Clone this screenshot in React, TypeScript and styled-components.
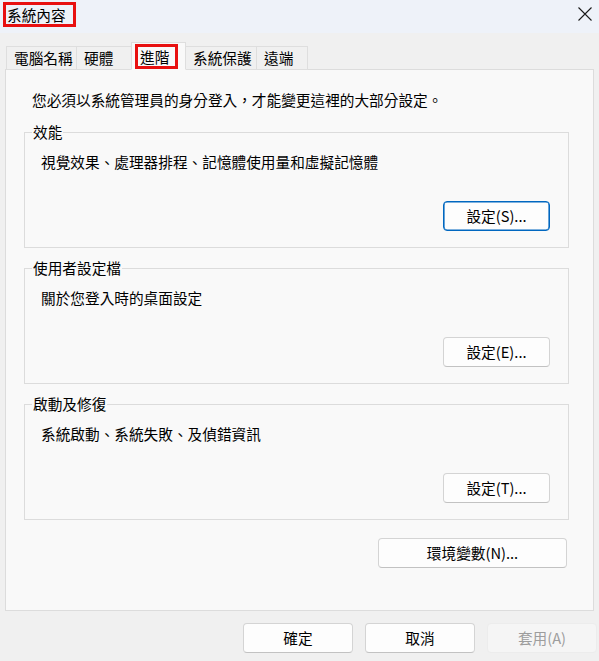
import React from "react";
import styled, { createGlobalStyle } from "styled-components";

const Global = createGlobalStyle`
  html, body { margin: 0; padding: 0; }
  body {
    background: #f0f0f0;
    font-family: "Noto Sans CJK TC", "Noto Sans", sans-serif;
    font-size: 14.67px;
    color: #000;
  }
  * { box-sizing: border-box; }
`;

const Window = styled.div`
  width: 599px;
  height: 661px;
  display: flex;
  flex-direction: column;
  background: #f0f0f0;
  overflow: hidden;
`;

const TitleBar = styled.div`
  height: 33px;
  flex: none;
  background: #eef2f9;
  display: flex;
  align-items: flex-start;
  justify-content: space-between;
  padding: 2px 6px 0 3px;
`;

const Highlight = styled.span`
  display: inline-flex;
  align-items: center;
  border: 3px solid #e81010;
  line-height: 19px;
`;

const TitleText = styled(Highlight)`
  height: 25px;
  padding: 0 7px 0 1px;
  font-size: 14.67px;
`;

const CloseButton = styled.button`
  border: 0;
  background: transparent;
  padding: 0;
  margin-top: 4px;
  width: 16px;
  height: 16px;
  display: flex;
`;

const Body = styled.div`
  flex: 1;
  display: flex;
  flex-direction: column;
  padding: 0 5px;
`;

const TabStrip = styled.div`
  display: flex;
  align-items: flex-end;
  height: 36px;
  padding-left: 1px;
  position: relative;
  z-index: 1;
`;

const Tab = styled.div<{ $w: number; $active?: boolean; $first?: boolean }>`
  width: ${(p) => p.$w}px;
  height: ${(p) => (p.$active ? 28 : 24)}px;
  margin: 0 0 -1px ${(p) => (p.$active ? -2 : 0)}px;
  padding-left: ${(p) => (p.$active ? 3 : 7)}px;
  padding-top: ${(p) => (p.$active ? 1 : 0)}px;
  display: flex;
  align-items: center;
  background: ${(p) => (p.$active ? "#f9f9f9" : "#f0f0f0")};
  border: 1px solid #dedede;
  border-bottom-color: ${(p) => (p.$active ? "#f9f9f9" : "#dedede")};
  border-left-width: ${(p) => (p.$first || p.$active ? 1 : 0)}px;
  position: relative;
  z-index: ${(p) => (p.$active ? 2 : 0)};
  line-height: 20px;
  white-space: nowrap;
`;

const TabLabel = styled(Highlight)`
  height: 25px;
  padding: 0 6px 0 2px;
`;

const Panel = styled.div`
  height: 542px;
  background: #f9f9f9;
  border: 1px solid #dcdcdc;
  display: flex;
  flex-direction: column;
  padding: 0 24px 0 18px;
`;

const Intro = styled.div`
  margin: 20px 0 12px 8px;
  line-height: 20px;
`;

const Group = styled.fieldset`
  margin: 0 0 10px;
  padding: 9px 18px 16px 0;
  border: 1px solid #dcdcdc;
  min-width: 0;
  display: flex;
  flex-direction: column;
  &:last-of-type {
    margin-bottom: 0;
  }
`;

const Legend = styled.legend`
  margin-left: 7px;
  padding: 0 1px;
  line-height: 20px;
`;

const Desc = styled.div`
  line-height: 21px;
  padding-left: 16px;
`;

const ButtonRow = styled.div<{ $top?: number; $right?: number }>`
  display: flex;
  justify-content: flex-end;
  gap: 12px;
  margin-top: ${(p) => p.$top ?? 0}px;
  margin-right: ${(p) => p.$right ?? 0}px;
`;

const Button = styled.button<{ $w: number; $focus?: boolean }>`
  width: ${(p) => p.$w}px;
  height: 30px;
  font-family: inherit;
  font-size: 14.67px;
  color: ${(p) => (p.disabled ? "#9d9d9d" : "#000")};
  background: ${(p) => (p.disabled ? "#f5f5f5" : "#fdfdfd")};
  border: 1px solid
    ${(p) => (p.$focus ? "#0067c0" : p.disabled ? "#ececec" : "#d4d4d4")};
  border-bottom-color: ${(p) =>
    p.$focus ? "#0067c0" : p.disabled ? "#ececec" : "#c2c2c2"};
  box-shadow: ${(p) => (p.$focus ? "inset 0 0 0 0.6px #0067c0" : "none")};
  border-radius: 4px;
  padding: 0;
  line-height: 20px;
`;

const Footer = styled.div`
  display: flex;
  justify-content: flex-end;
  gap: 12px;
  padding: 12px 0 0;
  margin-right: -3px;
`;

const CloseIcon = () => (
  <svg width="16" height="16" viewBox="0 0 16 16">
    <path d="M1.5 1.5 L14.5 14.5 M14.5 1.5 L1.5 14.5" stroke="#1a1a1a" strokeWidth="1.1" fill="none" />
  </svg>
);

const groups = [
  { title: "效能", desc: "視覺效果、處理器排程、記憶體使用量和虛擬記憶體", btn: "設定(S)...", focus: true },
  { title: "使用者設定檔", desc: "關於您登入時的桌面設定", btn: "設定(E)..." },
  { title: "啟動及修復", desc: "系統啟動、系統失敗、及偵錯資訊", btn: "設定(T)..." },
];

export default function App() {
  return (
    <>
      <Global />
      <Window>
        <TitleBar>
          <TitleText>系統內容</TitleText>
          <CloseButton aria-label="關閉">
            <CloseIcon />
          </CloseButton>
        </TitleBar>
        <Body>
          <TabStrip>
            <Tab $w={71} $first>電腦名稱</Tab>
            <Tab $w={56}>硬體</Tab>
            <Tab $w={55} $active>
              <TabLabel>進階</TabLabel>
            </Tab>
            <Tab $w={71}>系統保護</Tab>
            <Tab $w={51}>遠端</Tab>
          </TabStrip>
          <Panel>
            <Intro>您必須以系統管理員的身分登入，才能變更這裡的大部分設定。</Intro>
            {groups.map((g) => (
              <Group key={g.title}>
                <Legend>{g.title}</Legend>
                <Desc>{g.desc}</Desc>
                <ButtonRow $top={29}>
                  <Button $w={107} $focus={g.focus}>{g.btn}</Button>
                </ButtonRow>
              </Group>
            ))}
            <ButtonRow $top={18} $right={2}>
              <Button $w={189}>環境變數(N)...</Button>
            </ButtonRow>
          </Panel>
          <Footer>
            <Button $w={110}>確定</Button>
            <Button $w={110}>取消</Button>
            <Button $w={110} disabled>套用(A)</Button>
          </Footer>
        </Body>
      </Window>
    </>
  );
}
